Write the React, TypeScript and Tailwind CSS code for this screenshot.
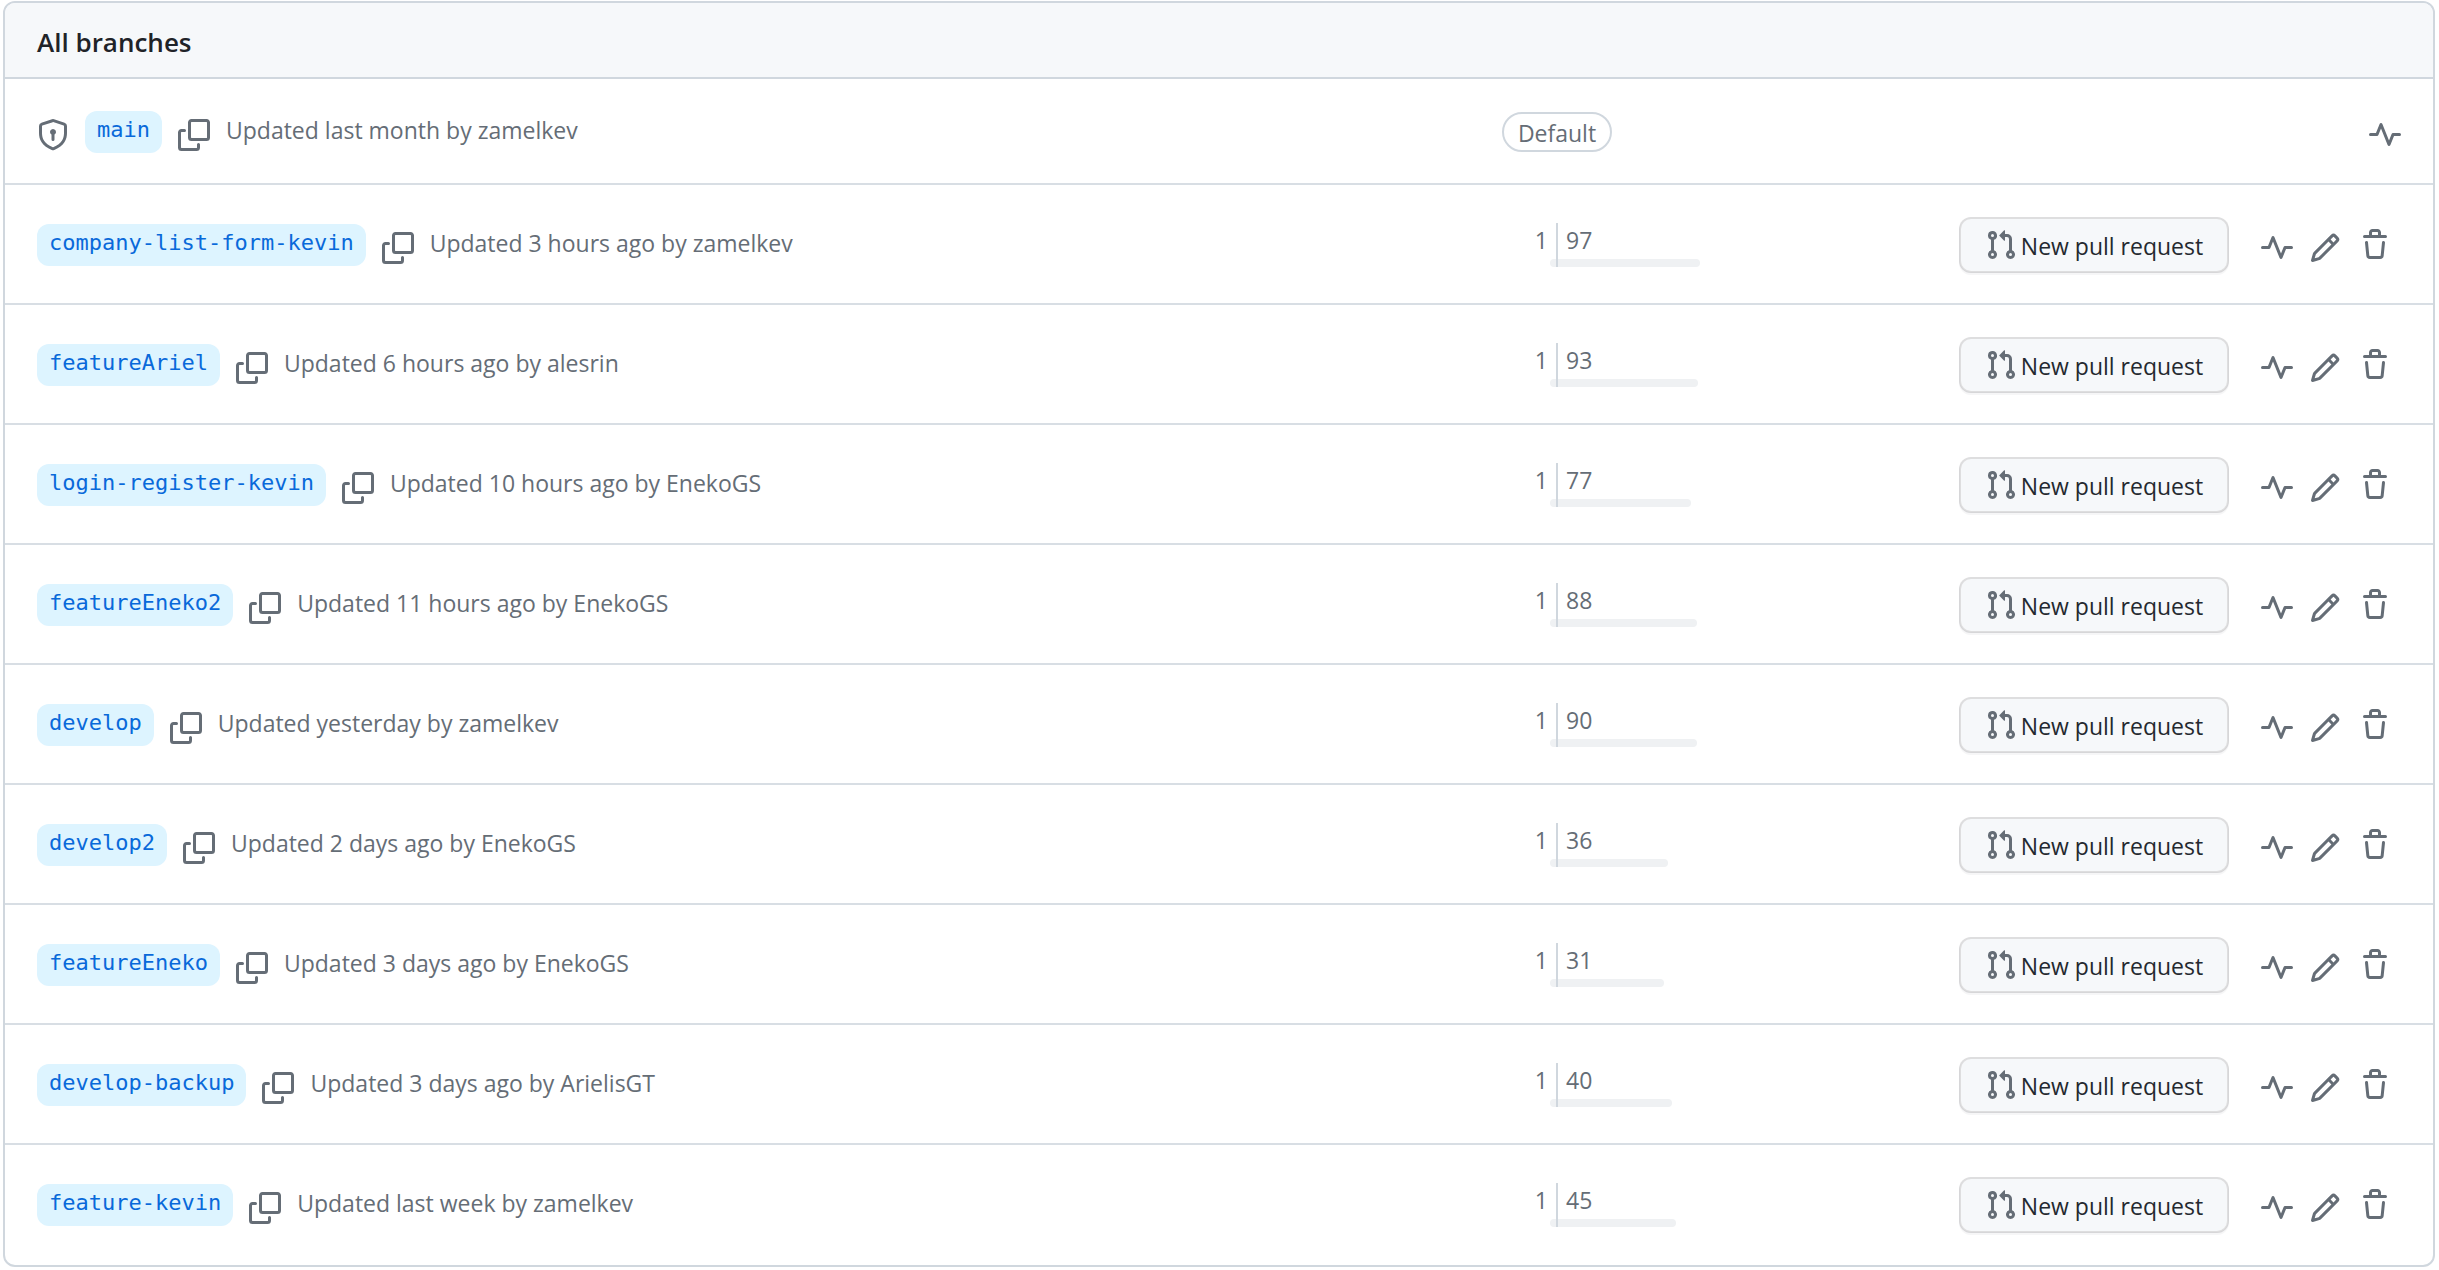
import React from "react";

const icons = {
  shieldLock:
    "m8.533.133 5.25 1.68A1.75 1.75 0 0 1 15 3.48V7c0 1.566-.32 3.182-1.303 4.682-.983 1.498-2.585 2.813-5.032 3.855a1.697 1.697 0 0 1-1.33 0c-2.447-1.042-4.049-2.357-5.032-3.855C1.32 10.182 1 8.566 1 7V3.48a1.755 1.755 0 0 1 1.217-1.667l5.25-1.68a1.748 1.748 0 0 1 1.066 0Zm-.61 1.429.001.001-5.25 1.68a.251.251 0 0 0-.174.237V7c0 1.36.275 2.666 1.057 3.859.784 1.194 2.121 2.342 4.366 3.298a.196.196 0 0 0 .154 0c2.245-.957 3.582-2.103 4.366-3.297C13.225 9.666 13.5 8.358 13.5 7V3.48a.25.25 0 0 0-.174-.238l-5.25-1.68a.25.25 0 0 0-.153 0ZM9.5 6.5c0 .536-.286 1.032-.75 1.3v2.45a.75.75 0 0 1-1.5 0V7.8A1.5 1.5 0 1 1 9.5 6.5Z",
  copy:
    "M0 6.75C0 5.784.784 5 1.75 5h1.5a.75.75 0 0 1 0 1.5h-1.5a.25.25 0 0 0-.25.25v7.5c0 .138.112.25.25.25h7.5a.25.25 0 0 0 .25-.25v-1.5a.75.75 0 0 1 1.5 0v1.5A1.75 1.75 0 0 1 9.25 16h-7.5A1.75 1.75 0 0 1 0 14.25ZM5 1.75C5 .784 5.784 0 6.75 0h7.5C15.216 0 16 .784 16 1.75v7.5A1.75 1.75 0 0 1 14.25 11h-7.5A1.75 1.75 0 0 1 5 9.25Zm1.75-.25a.25.25 0 0 0-.25.25v7.5c0 .138.112.25.25.25h7.5a.25.25 0 0 0 .25-.25v-7.5a.25.25 0 0 0-.25-.25Z",
  pulse:
    "M6 2c.306 0 .582.187.696.471L10 10.731l1.304-3.26A.751.751 0 0 1 12 7h3.25a.75.75 0 0 1 0 1.5h-2.742l-1.812 4.528a.751.751 0 0 1-1.392 0L6 4.77 4.696 8.03A.75.75 0 0 1 4 8.5H.75a.75.75 0 0 1 0-1.5h2.742l1.812-4.529A.751.751 0 0 1 6 2Z",
  pencil:
    "M11.013 1.427a1.75 1.75 0 0 1 2.474 0l1.086 1.086a1.75 1.75 0 0 1 0 2.474l-8.61 8.61c-.21.21-.47.364-.756.445l-3.251.93a.75.75 0 0 1-.927-.928l.929-3.25c.081-.286.235-.547.445-.758l8.61-8.61Zm.176 4.823L9.75 4.81l-6.286 6.287a.253.253 0 0 0-.064.108l-.558 1.953 1.953-.558a.253.253 0 0 0 .108-.064Zm1.238-3.763a.25.25 0 0 0-.354 0L10.811 3.75l1.439 1.44 1.263-1.263a.25.25 0 0 0 0-.354Z",
  trash:
    "M11 1.75V3h2.25a.75.75 0 0 1 0 1.5H2.75a.75.75 0 0 1 0-1.5H5V1.75C5 .784 5.784 0 6.75 0h2.5C10.216 0 11 .784 11 1.75ZM4.496 6.675l.66 6.6a.25.25 0 0 0 .249.225h5.19a.25.25 0 0 0 .249-.225l.66-6.6a.75.75 0 0 1 1.492.149l-.66 6.6A1.748 1.748 0 0 1 10.595 15h-5.19a1.75 1.75 0 0 1-1.741-1.575l-.66-6.6a.75.75 0 1 1 1.492-.15ZM6.5 1.75V3h3V1.75a.25.25 0 0 0-.25-.25h-2.5a.25.25 0 0 0-.25.25Z",
  pullRequest:
    "M1.5 3.25a2.25 2.25 0 1 1 3 2.122v5.256a2.251 2.251 0 1 1-1.5 0V5.372A2.25 2.25 0 0 1 1.5 3.25Zm5.677-.177L9.573.677A.25.25 0 0 1 10 .854V2.5h1A2.5 2.5 0 0 1 13.5 5v5.628a2.251 2.251 0 1 1-1.5 0V5a1 1 0 0 0-1-1h-1v1.646a.25.25 0 0 1-.427.177L7.177 3.427a.25.25 0 0 1 0-.354ZM3.75 2.5a.75.75 0 1 0 0 1.5.75.75 0 0 0 0-1.5Zm0 9.5a.75.75 0 1 0 0 1.5.75.75 0 0 0 0-1.5Zm8.25.75a.75.75 0 1 0 1.5 0 .75.75 0 0 0-1.5 0Z",
};

function Icon({ name }: { name: keyof typeof icons }) {
  return (
    <svg viewBox="0 0 16 16" aria-hidden="true" className="size-8 shrink-0 fill-[#656d76]">
      <path d={icons[name]} />
    </svg>
  );
}

type Branch = {
  name: string;
  updated: string;
  isDefault?: boolean;
  behind?: number;
  ahead?: number;
  bar?: number;
};

const branches: Branch[] = [
  { name: "main", updated: "Updated last month by zamelkev", isDefault: true },
  { name: "company-list-form-kevin", updated: "Updated 3 hours ago by zamelkev", behind: 1, ahead: 97, bar: 142 },
  { name: "featureAriel", updated: "Updated 6 hours ago by alesrin", behind: 1, ahead: 93, bar: 140 },
  { name: "login-register-kevin", updated: "Updated 10 hours ago by EnekoGS", behind: 1, ahead: 77, bar: 133 },
  { name: "featureEneko2", updated: "Updated 11 hours ago by EnekoGS", behind: 1, ahead: 88, bar: 139 },
  { name: "develop", updated: "Updated yesterday by zamelkev", behind: 1, ahead: 90, bar: 139 },
  { name: "develop2", updated: "Updated 2 days ago by EnekoGS", behind: 1, ahead: 36, bar: 110 },
  { name: "featureEneko", updated: "Updated 3 days ago by EnekoGS", behind: 1, ahead: 31, bar: 106 },
  { name: "develop-backup", updated: "Updated 3 days ago by ArielisGT", behind: 1, ahead: 40, bar: 114 },
  { name: "feature-kevin", updated: "Updated last week by zamelkev", behind: 1, ahead: 45, bar: 118 },
];

function Divergence({ branch }: { branch: Branch }) {
  return (
    <div className="flex w-full">
      <div className="flex flex-1 flex-col items-end">
        <span className="pr-2 pb-0.5 leading-[34px]">{branch.behind}</span>
        <span className="h-2 w-1.5 rounded-l-full bg-[#eff1f3]" />
      </div>
      <div className="flex flex-1 flex-col items-start border-l-2 border-[#d0d7de]">
        <span className="pb-0.5 pl-2 leading-[34px]">{branch.ahead}</span>
        <span className="h-2 rounded-r-full bg-[#eff1f3]" style={{ width: branch.bar }} />
      </div>
    </div>
  );
}

function BranchRow({ branch }: { branch: Branch }) {
  return (
    <li className="grid grid-cols-[1351fr_338fr_675fr] items-center border-t-2 border-[#d8dee4] px-8 pt-8 pb-[30px] first:border-[#d0d7de] last:pb-8">
      <div className="flex items-center gap-4">
        {branch.isDefault && (
          <span className="mt-1.5" role="img" aria-label="Protected branch">
            <Icon name="shieldLock" />
          </span>
        )}
        <a
          href="#"
          className="rounded-xl bg-[#ddf4ff] px-3 pt-[5px] pb-[9px] font-['DejaVu_Sans_Mono',monospace] text-[22px] leading-7 whitespace-nowrap text-[#0969da]"
        >
          {branch.name}
        </a>
        <button type="button" className="mt-1.5" aria-label={`Copy ${branch.name}`}>
          <Icon name="copy" />
        </button>
        <span className="pb-1 leading-8 whitespace-nowrap">{branch.updated}</span>
      </div>
      <div className="flex justify-center">
        {branch.isDefault ? (
          <span className="rounded-full border-2 border-[#d0d7de] px-3.5 pt-0.5 leading-[34px]">Default</span>
        ) : (
          <Divergence branch={branch} />
        )}
      </div>
      <div className="flex items-center justify-end">
        {!branch.isDefault && (
          <button
            type="button"
            className="mr-8 flex h-14 w-[270px] items-center justify-center gap-1 rounded-xl border-2 border-[#1f2328]/15 bg-[#f6f8fa] bg-clip-padding whitespace-nowrap text-[#24292f] shadow-[0_2px_0_rgba(31,35,40,0.04)]"
          >
            <Icon name="pullRequest" />
            <span className="pt-0.5">New pull request</span>
          </button>
        )}
        <a href="#" className="mt-1.5" aria-label={`Activity of ${branch.name}`}>
          <Icon name="pulse" />
        </a>
        {!branch.isDefault && (
          <>
            <button type="button" className="mt-1.5 ml-4" aria-label={`Rename ${branch.name}`}>
              <Icon name="pencil" />
            </button>
            <button type="button" className="mr-2.5 ml-[18px]" aria-label={`Delete ${branch.name}`}>
              <Icon name="trash" />
            </button>
          </>
        )}
      </div>
    </li>
  );
}

export default function App() {
  return (
    <main className="flow-root bg-white font-['Open_Sans',sans-serif] text-[23px] text-[#656d76]">
      <section className="mt-px mr-1 mb-[3px] ml-[3px] overflow-hidden rounded-xl border-2 border-[#d0d7de]">
        <h2 className="bg-[#f6f8fa] px-8 pt-[18px] pb-3.5 text-[26px] leading-[42px] font-semibold text-[#1f2328]">
          All branches
        </h2>
        <ul>
          {branches.map((branch) => (
            <BranchRow key={branch.name} branch={branch} />
          ))}
        </ul>
      </section>
    </main>
  );
}
